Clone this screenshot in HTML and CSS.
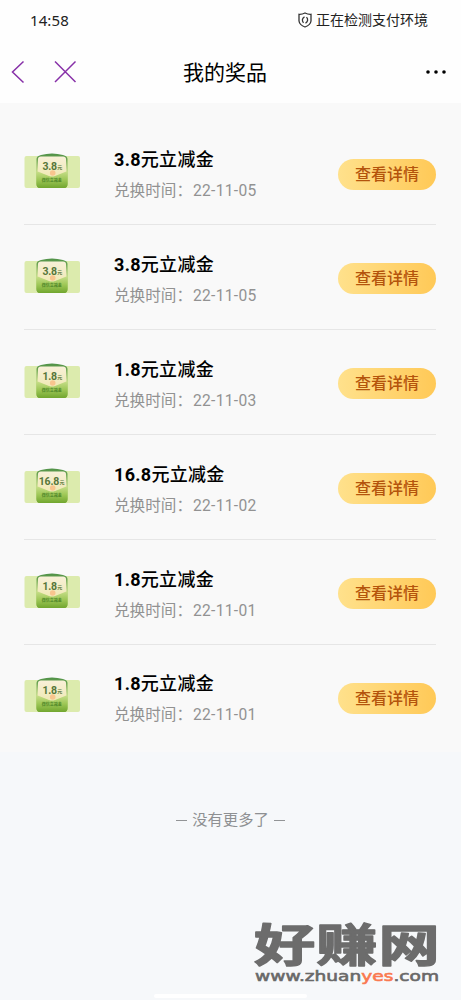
FILE: index.html
```
<!DOCTYPE html>
<html lang="zh-CN">
<head>
<meta charset="utf-8">
<title>我的奖品</title>
<link rel="stylesheet" href="styles.css">
</head>
<body>
<svg width="0" height="0" class="defs">
  <defs>
    <linearGradient id="cardGreen" x1="0" y1="0" x2="0" y2="1">
      <stop offset="0" stop-color="#4f9148"/><stop offset=".55" stop-color="#a8cd66"/><stop offset="1" stop-color="#7caf36"/>
    </linearGradient>
    <linearGradient id="paper" x1="0" y1="0" x2="0" y2="1">
      <stop offset="0" stop-color="#f8f0d8"/><stop offset="1" stop-color="#efe9b4"/>
    </linearGradient>
    <linearGradient id="pocket" x1="0" y1="0" x2="0" y2="1">
      <stop offset="0" stop-color="#c9df8c"/><stop offset=".5" stop-color="#9fc858"/><stop offset="1" stop-color="#71a62f"/>
    </linearGradient>
    <g id="voucher">
      <rect x=".5" y="3" width="55.500" height="32" rx="2" fill="#dcebad"/>
      <path d="M12.500 6Q12.500 3 17 2Q28-1 39 2Q43.500 3 43.500 6V31Q43.500 35 40 35H16Q12.500 35 12.500 31Z" fill="url(#cardGreen)"/>
      <path d="M14 6Q14 3.500 17 3.500H39Q42 3.500 42 6L43 24H13Z" fill="url(#paper)"/>
      <path d="M12.500 18L25 23Q28 24 31 23L43.500 18V31Q43.500 35 40 35H16Q12.500 35 12.500 31Z" fill="url(#pocket)"/>
      <circle cx="28.700" cy="20" r="2.800" fill="#f8c58e"/>
    </g>
  </defs>
</svg>
<header class="top">
  <div class="status">
    <span class="clock">14:58</span>
    <span class="notice">
      <svg class="shield" viewBox="0 0 14 16" fill="none" stroke="#333" stroke-width="1.300"><path d="M7 1Q10 2.500 13 2.300V9Q12.500 13 7 15Q1.500 13 1 9V2.300Q4 2.500 7 1Z"/><path d="M6.500 4.800Q2.800 7.500 5.500 10.800M7.500 11.200Q11.200 8.500 8.500 5.200"/></svg>
      <span class="notice-text">正在检测支付环境</span>
    </span>
  </div>
  <nav class="nav">
    <svg class="nav-left" viewBox="0 0 80 24" fill="none" stroke="#8730a8" stroke-width="1.500"><path d="M23.500 1.500L12.500 12L23.500 22.500M55 1.500L75.500 22M75.500 1.500L55 22"/></svg>
    <h1>我的奖品</h1>
    <svg class="more" viewBox="0 0 22 6"><circle cx="3" cy="3" r="1.800"/><circle cx="11" cy="3" r="1.800"/><circle cx="19" cy="3" r="1.800"/></svg>
  </nav>
</header>
<main class="list">
  <article class="row">
    <svg class="pic" viewBox="0 0 56 36"><use href="#voucher"/><text class="amount" x="18.500" y="16.500" textLength="14.500">3.8</text><text class="unit" x="33.200" y="16">元</text><text class="tag" x="17.700" y="29" textLength="20">微信立减金</text></svg>
    <div class="info"><h2><b>3.8</b>元立减金</h2><p>兑换时间：<span class="date">22-11-05</span></p></div><button class="btn">查看详情</button>
  </article>
  <article class="row">
    <svg class="pic" viewBox="0 0 56 36"><use href="#voucher"/><text class="amount" x="18.500" y="16.500" textLength="14.500">3.8</text><text class="unit" x="33.200" y="16">元</text><text class="tag" x="17.700" y="29" textLength="20">微信立减金</text></svg>
    <div class="info"><h2><b>3.8</b>元立减金</h2><p>兑换时间：<span class="date">22-11-05</span></p></div><button class="btn">查看详情</button>
  </article>
  <article class="row">
    <svg class="pic" viewBox="0 0 56 36"><use href="#voucher"/><text class="amount" x="18.500" y="16.500" textLength="14.500">1.8</text><text class="unit" x="33.200" y="16">元</text><text class="tag" x="17.700" y="29" textLength="20">微信立减金</text></svg>
    <div class="info"><h2><b>1.8</b>元立减金</h2><p>兑换时间：<span class="date">22-11-03</span></p></div><button class="btn">查看详情</button>
  </article>
  <article class="row">
    <svg class="pic" viewBox="0 0 56 36"><use href="#voucher"/><text class="amount" x="14.800" y="16.500" textLength="20.500">16.8</text><text class="unit" x="35.500" y="16">元</text><text class="tag" x="17.700" y="29" textLength="20">微信立减金</text></svg>
    <div class="info"><h2><b>16.8</b>元立减金</h2><p>兑换时间：<span class="date">22-11-02</span></p></div><button class="btn">查看详情</button>
  </article>
  <article class="row">
    <svg class="pic" viewBox="0 0 56 36"><use href="#voucher"/><text class="amount" x="18.500" y="16.500" textLength="14.500">1.8</text><text class="unit" x="33.200" y="16">元</text><text class="tag" x="17.700" y="29" textLength="20">微信立减金</text></svg>
    <div class="info"><h2><b>1.8</b>元立减金</h2><p>兑换时间：<span class="date">22-11-01</span></p></div><button class="btn">查看详情</button>
  </article>
  <article class="row">
    <svg class="pic" viewBox="0 0 56 36"><use href="#voucher"/><text class="amount" x="18.500" y="16.500" textLength="14.500">1.8</text><text class="unit" x="33.200" y="16">元</text><text class="tag" x="17.700" y="29" textLength="20">微信立减金</text></svg>
    <div class="info"><h2><b>1.8</b>元立减金</h2><p>兑换时间：<span class="date">22-11-01</span></p></div><button class="btn">查看详情</button>
  </article>
</main>
<footer class="end"><i class="dash"></i><span>没有更多了</span><i class="dash"></i></footer>
<div class="home-bar"></div>
<svg class="mark" viewBox="0 0 191 70">
  <g transform="translate(3 44) scale(1.360 1)"><text class="mark-name" x="0" y="0" textLength="136.500" lengthAdjust="spacing">好赚网</text></g>
  <text class="mark-url" x="4" y="63" textLength="184" lengthAdjust="spacingAndGlyphs">www.zhuan<tspan class="yes">yes</tspan>.com</text>
</svg>
</body>
</html>
```
FILE: styles.css
```
* { box-sizing: border-box; }
body {
  margin: 0;
  height: 1000px;
  overflow: hidden;
  position: relative;
  background: #f6f8fa;
  color: #000;
  font-family: Roboto, "Noto Sans CJK SC", sans-serif;
}
h1, h2, p { margin: 0; font-weight: 400; }
.defs { position: absolute; }
.top { height: 103px; background: #fefefe; }
.status { height: 41px; display: flex; justify-content: space-between; align-items: center; padding: 0 33px 0 30px; }
.clock { font: 400 15px/20px "Noto Sans", sans-serif; color: #222; letter-spacing: .1px; margin-top: -1px; }
.notice { display: flex; align-items: center; gap: 4px; font-size: 14px; line-height: 20px; color: #222; margin-top: -1px; }
.shield { width: 14px; height: 16px; }
.nav { height: 62px; display: grid; grid-template-columns: 100px 1fr 100px; align-items: center; }
.nav-left { width: 80px; height: 24px; }
.nav h1 { text-align: center; font-size: 21px; line-height: 30px; padding: 1px 11px 0 0; }
.more { width: 22px; height: 6px; justify-self: end; margin-right: 14px; }
.list { height: 649px; padding: 17.600px 25px 0 24px; background: #f9f9f9; }
.row { height: 104.9px; display: flex; align-items: center; border-bottom: 1px solid #e6e6e6; }
.row:last-child { border-bottom-color: transparent; }
.pic { width: 56px; height: 36px; flex: none; margin-top: -3px; }
.amount { font: 700 10.500px Roboto, sans-serif; fill: #57763a; }
.unit { font: 700 5px "Noto Sans CJK SC", sans-serif; fill: #57763a; }
.tag { font: 700 4px "Noto Sans CJK SC", sans-serif; fill: #4d8527; }
.info { flex: 1; padding: 9px 0 0 34px; }
.info h2 { font-size: 18px; line-height: 28px; font-weight: 500; letter-spacing: .3px; margin-top: -5px; }
.info b { font-weight: 700; }
.info p { font-size: 15.6px; line-height: 24px; color: #929292; margin-top: 5px; }
.date { letter-spacing: .3px; margin-left: 1px; }
.btn {
  width: 98px; height: 31px; padding: 0; border: 0; border-radius: 16px; margin-top: 3px;
  background: linear-gradient(90deg, #ffe18c, #ffc957);
  color: #b4540c;
  font: 500 16px/31px Roboto, "Noto Sans CJK SC", sans-serif;
}
.end { display: flex; justify-content: center; align-items: center; gap: 5px; padding-top: 56px; color: #8e9092; font-size: 15.3px; line-height: 24px; }
.dash { width: 11px; height: 1px; background: #929496; }
.home-bar { position: absolute; left: 154px; bottom: 2px; width: 153px; height: 4px; border-radius: 2px; background: #fff; }
.mark { position: absolute; left: 251px; top: 918px; width: 191px; height: 70px; overflow: visible; }
.mark-name { font: 700 45px "Noto Sans CJK SC", sans-serif; fill: #6c6c6c; stroke: #6c6c6c; stroke-width: 1.400px; stroke-linejoin: round; }
.mark-url { font: 400 14px "DejaVu Sans", sans-serif; fill: #696969; stroke: #696969; stroke-width: .6px; }
.yes { fill: #fa7950; stroke: #fa7950; }
```
